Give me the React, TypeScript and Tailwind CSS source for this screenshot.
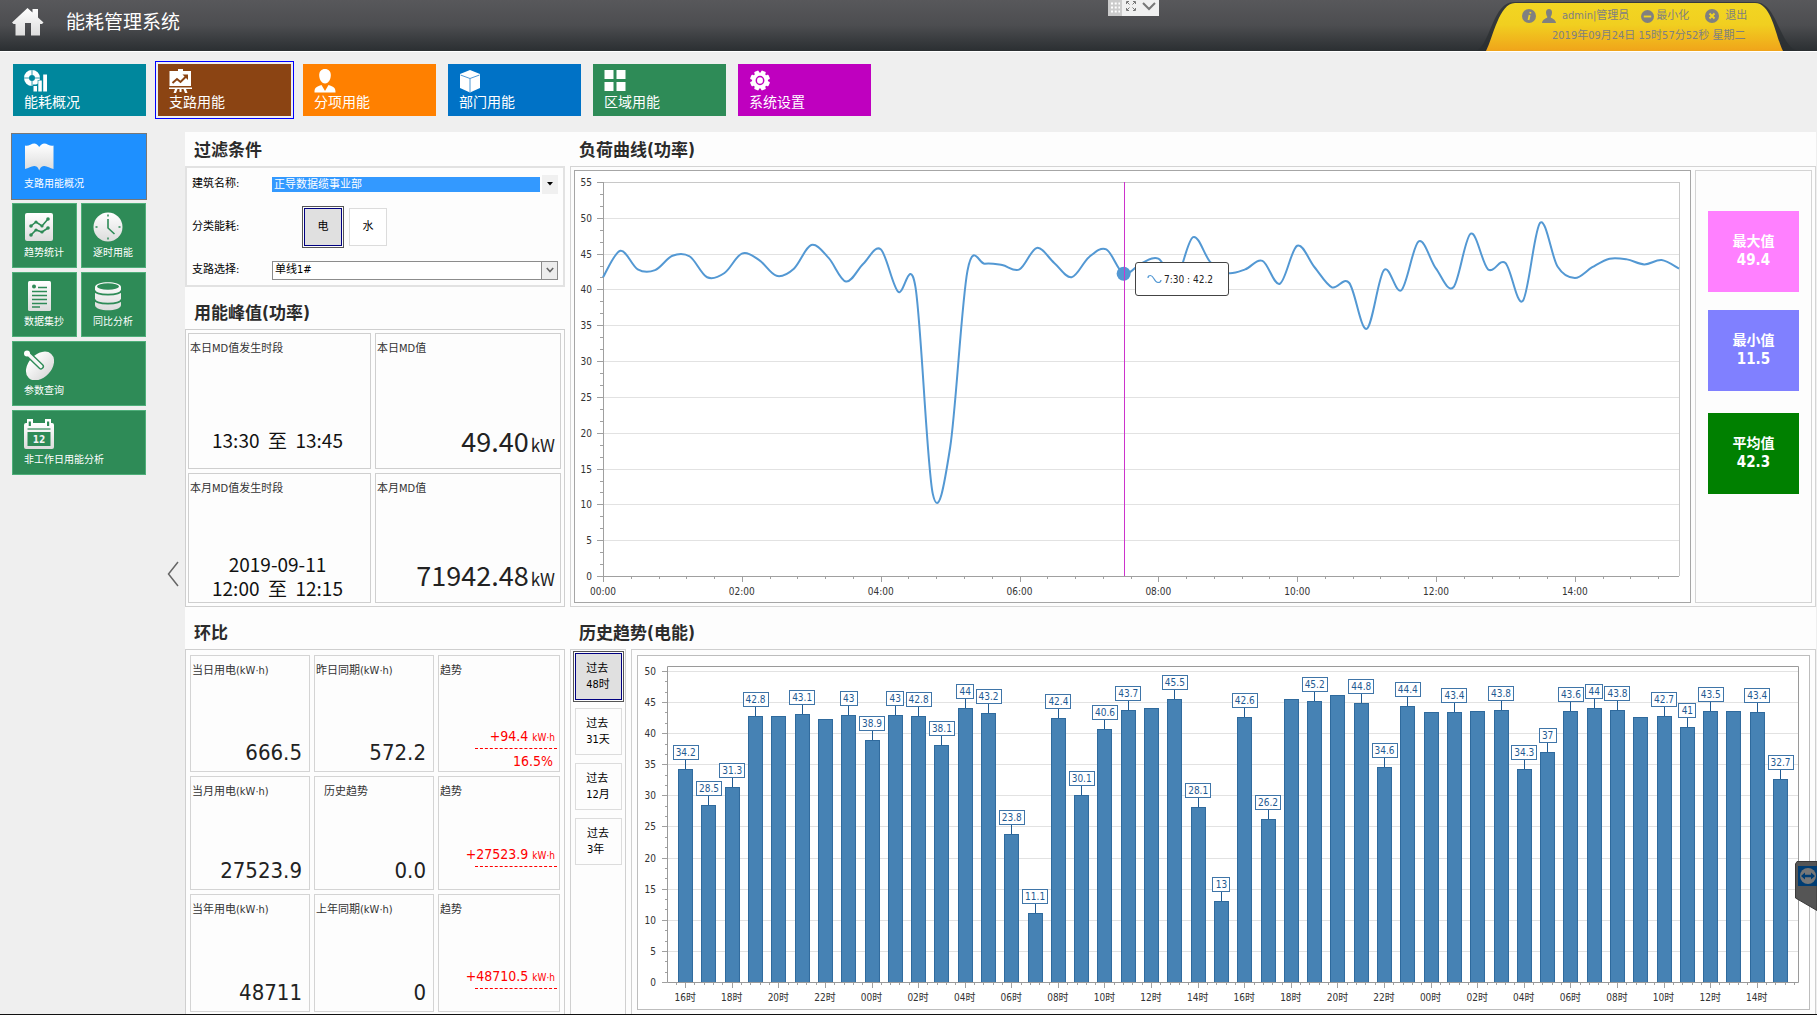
import React, { useLayoutEffect, useRef, useState } from 'react';

type Size = { w: number; h: number };

function useSize() {
  const ref = useRef<HTMLDivElement>(null);
  const [size, setSize] = useState<Size>({ w: 0, h: 0 });
  useLayoutEffect(() => {
    const el = ref.current;
    if (!el) return;
    const measure = () => setSize({ w: el.clientWidth, h: el.clientHeight });
    measure();
    const ro = new ResizeObserver(measure);
    ro.observe(el);
    return () => ro.disconnect();
  }, []);
  return { ref, size };
}

const crisp = (n: number) => Math.round(n) + 0.5;

/* ---------- icons ---------- */

function Shade({ id }: { id: string }) {
  return (
    <linearGradient id={id} x1="0" y1="0" x2="0" y2="1">
      <stop offset="0" stopColor="#ffffff" />
      <stop offset="1" stopColor="#dcdcdc" />
    </linearGradient>
  );
}

const HomeIcon = () => (
  <svg viewBox="0 0 32 28" className="h-7 w-8">
    <defs><Shade id="home" /></defs>
    <path fill="url(#home)" d="M15.500 0 20.500 4.500V1H26V9.500L31.500 14.500 30 16H28V27.500H19V15H13V27.500H3.500V16H1.500L0 14.500Z" />
  </svg>
);

const OverviewIcon = () => (
  <svg viewBox="0 0 24 24" className="h-6 w-6">
    <circle cx="8" cy="9" r="5.500" fill="none" stroke="#fff" strokeWidth="5" />
    <path d="M8 0v6M8 12v6M0 9h5M11 9h5" stroke="#00879d" strokeWidth=".8" />
    <path d="M8.700 15.500h5V11h3V9h7v15H8.700z" fill="#00879d" />
    <path d="M9.500 17h3.500v5.500H9.500zM14.300 11.500h3.500v11h-3.500zM19.200 5.500h3.800v17h-3.800z" fill="#fff" />
  </svg>
);

const BoardIcon = () => (
  <svg viewBox="0 0 24 24" className="h-6 w-6">
    <path d="M9 0h5v2h8v15H0.500V2H9zM0 18.500h23v1.500H0zM6 20h2.500l-1.500 4H4.500zM10.500 20h2v3h-2zM14.500 20H17l1.500 4H16z" fill="#fff" />
    <path d="m3.500 14 4.500-4 3.500 3 5.500-5.500" fill="none" stroke="#8b4413" strokeWidth="2" />
    <path d="M13.500 5.500h5.500V11z" fill="#8b4413" />
  </svg>
);

const PersonIcon = () => (
  <svg viewBox="0 0 24 24" className="h-6 w-6">
    <path d="M11 0c3.600 0 5.800 2.400 5.800 6 0 4-2 8.500-5.800 8.500S5.200 10 5.200 6C5.200 2.400 7.400 0 11 0Z" fill="#fff" />
    <path d="M0.500 23.500c0-4 .5-5.500 7-7.500l3.500 6 3.500-6c6.500 2 7 3.500 7 7.500z" fill="#fff" />
  </svg>
);

const CubeIcon = () => (
  <svg viewBox="0 0 24 24" className="h-6 w-6">
    <path d="M11 1 21 5v14l-10 4.500L1 19V5z" fill="#fff" />
    <path d="m1.500 6 9.500 3.500L20.500 6M11 9.500V23" fill="none" stroke="#4f97d3" strokeWidth="1" />
  </svg>
);

const GridIcon = () => (
  <svg viewBox="0 0 24 24" className="h-6 w-6">
    <path d="M0.500 1h9v9h-9zM12.500 1h9v9h-9zM0.500 13h9v9h-9zM12.500 13h9v9h-9z" fill="#fff" />
  </svg>
);

const GearIcon = () => (
  <svg viewBox="0 0 24 24" className="h-6 w-6">
    <g fill="#fff">
      <circle cx="11" cy="11.500" r="8" />
      {[22.5, 67.5, 112.5, 157.5, 202.5, 247.5, 292.5, 337.5].map((a) => (
        <rect key={a} x="8.600" y="1.500" width="4.800" height="5" rx="1" transform={`rotate(${a} 11 11.500)`} />
      ))}
    </g>
    <ellipse cx="11" cy="11.500" rx="3.700" ry="4" fill="none" stroke="#bf00bf" strokeWidth="1.500" />
  </svg>
);

const BookIcon = () => (
  <svg viewBox="0 0 30 30" className="h-[30px] w-[30px]">
    <defs><Shade id="book" /></defs>
    <path fill="url(#book)" d="M1 2.500C4 4 7 .5 10.500 .5 13 .5 14.500 3 15.200 4 16 3 17.500 .5 20 .5 23.500 .5 26.500 4 29.500 2.500V26C26 25.500 23 22.800 20 23 17 23.200 16 25.500 15.200 27.500 14.500 25.500 13.500 23.200 10.500 23 7.500 22.800 4.500 25.500 1 26Z" />
  </svg>
);

const TrendIcon = () => (
  <svg viewBox="0 0 30 30" className="h-[30px] w-[30px]">
    <defs><Shade id="trend" /></defs>
    <rect x="1" y="1" width="28" height="28" rx="2" fill="url(#trend)" />
    <g fill="none" stroke="#2e8b57" strokeWidth="1.600">
      <path d="m7 14 5-4 6 4 6-7M7 23l5-5 6 2 6-4" />
    </g>
    <g fill="#2e8b57">
      <circle cx="7" cy="14" r="1.800" /><circle cx="12" cy="10" r="1.600" /><circle cx="18" cy="14" r="1.600" /><circle cx="24" cy="7" r="1.800" />
      <circle cx="7" cy="23" r="1.800" /><circle cx="12" cy="18" r="1.600" /><circle cx="18" cy="20" r="1.600" /><circle cx="24" cy="16" r="1.800" />
    </g>
  </svg>
);

const ClockIcon = () => (
  <svg viewBox="0 0 30 30" className="h-[30px] w-[30px]">
    <defs><Shade id="clock" /></defs>
    <circle cx="15" cy="15" r="14.500" fill="url(#clock)" />
    <path d="M15 7v9l6.500 6" fill="none" stroke="#2e8b57" strokeWidth="1.600" />
    <path d="M15 2.500v2M15 25.500v2M2.500 15h2M25.500 15h2" stroke="#2e8b57" strokeWidth="1.500" />
  </svg>
);

const DocIcon = () => (
  <svg viewBox="0 0 30 30" className="h-[30px] w-[30px]">
    <defs><Shade id="doc" /></defs>
    <rect x="4" y="0" width="23" height="30" rx="1.500" fill="url(#doc)" />
    <circle cx="10" cy="5.500" r="2" fill="#2e8b57" />
    <path d="M14 6.500h9M8 10.500h15M8 14.500h15M8 18.500h15M8 22.500h15M8 26h8" stroke="#2e8b57" strokeWidth="1.500" />
  </svg>
);

const DatabaseIcon = () => (
  <svg viewBox="0 0 30 30" className="h-[30px] w-[30px]">
    <defs><Shade id="db" /></defs>
    <path fill="url(#db)" d="M2 6C2 -.5 28 -.5 28 6V24C28 31 2 31 2 24Z" />
    <ellipse cx="15" cy="5.500" rx="11" ry="3.200" fill="#2e8b57" />
    <path d="M1.500 9.500c1.500 5.500 25.500 5.500 27 0M1.500 18.500c1.500 5.500 25.500 5.500 27 0" fill="none" stroke="#2e8b57" strokeWidth="1.800" />
  </svg>
);

const DishIcon = () => (
  <svg viewBox="0 0 30 30" className="h-[30px] w-[30px]">
    <defs><Shade id="dish" /></defs>
    <ellipse cx="16" cy="16" rx="16.500" ry="11.500" transform="rotate(-47 16 16)" fill="url(#dish)" />
    <path d="M5 5 17 16.500" stroke="#2e8b57" strokeWidth="6" strokeLinecap="round" />
    <path d="M3 3 17 16.500" stroke="#f6f6f6" strokeWidth="3.200" strokeLinecap="round" />
    <circle cx="3" cy="3.500" r="3" fill="#fff" />
  </svg>
);

const CalendarIcon = () => (
  <svg viewBox="0 0 30 30" className="h-[30px] w-[30px]">
    <defs><Shade id="cal" /></defs>
    <path fill="url(#cal)" d="M2 4H28Q30 4 30 6V28Q30 30 28 30H2Q0 30 0 28V6Q0 4 2 4Z" />
    <path d="M3 0h6v7H3zM21 0h6v7h-6z" fill="#fff" />
    <path d="M4.700 2.500h2.200v4.500H4.700zM23 2.500h2.200v4.500H23z" fill="#2e8b57" />
    <path d="M3.500 10h23" stroke="#2e8b57" strokeWidth="1.200" />
    <rect x="3.500" y="13" width="23" height="14" fill="#2e8b57" />
    <text x="15" y="24" textAnchor="middle" fontSize="10" fontWeight="bold" fill="#f2f2f2">12</text>
  </svg>
);

/* ---------- navigation ---------- */

const tabs = [
  { label: '能耗概况', icon: OverviewIcon, tone: 'bg-[#00879d]' },
  { label: '支路用能', icon: BoardIcon, tone: 'bg-[#8b4413] outline outline-[#0000ff] outline-offset-2' },
  { label: '分项用能', icon: PersonIcon, tone: 'bg-[#ff8000]' },
  { label: '部门用能', icon: CubeIcon, tone: 'bg-[#0072c6]' },
  { label: '区域用能', icon: GridIcon, tone: 'bg-[#2e8b57]' },
  { label: '系统设置', icon: GearIcon, tone: 'bg-[#bf00bf]' },
];

const sideItems = [
  { label: '支路用能概况', icon: BookIcon, wide: true, active: true },
  { label: '趋势统计', icon: TrendIcon },
  { label: '逐时用能', icon: ClockIcon },
  { label: '数据集抄', icon: DocIcon },
  { label: '同比分析', icon: DatabaseIcon },
  { label: '参数查询', icon: DishIcon, wide: true },
  { label: '非工作日用能分析', icon: CalendarIcon, wide: true },
];

function Header() {
  return (
    <header className="relative flex h-[51px] shrink-0 items-start justify-between bg-gradient-to-b from-[#58585b] via-[#4c4d50] to-[#2b2f32]">
      <div className="flex items-center gap-[22px] pl-3 pt-[6px]">
        <HomeIcon />
        <h1 className="text-[19px] leading-8 text-white">能耗管理系统</h1>
      </div>
      <div className="absolute left-[61%] top-0 flex h-4 w-[51px] bg-[#f0f0f0]">
        <svg viewBox="0 0 51 16" className="h-4 w-[51px]">
          <path d="M0 0h14v16H0z" fill="#cbcbcb" />
          <path d="M3 3.500h9M3 7.500h9M3 11.500h9" stroke="#fff" strokeWidth="2" strokeDasharray="2 1.700" />
          <g fill="none" stroke="#777" strokeWidth="1">
            <path d="M18.500 4V1.500H21M25 1.500h2.500V4M18.500 8v2.500H21M25 10.500h2.500V8M19 2l2.500 2.500M27 2l-2.500 2.500M19 10l2.500-2.500M27 10l-2.500-2.500" />
          </g>
          <path d="m35 3 6 6 6-6" fill="none" stroke="#777" strokeWidth="2" />
        </svg>
      </div>
      <div className="relative mr-[14px] h-[51px] w-[330px]">
        <svg viewBox="0 0 330 51" className="absolute inset-0 h-[51px] w-[330px]">
          <defs>
            <linearGradient id="plate" x1="0" y1="0" x2="0" y2="1">
              <stop offset="0" stopColor="#f2d622" />
              <stop offset=".45" stopColor="#f1cf20" />
              <stop offset="1" stopColor="#f0a41a" />
            </linearGradient>
          </defs>
          <path d="M4 51C18 42 20 2 41 2H282C304 2 306 44 324 51Z" fill="#2a2e30" opacity=".7" />
          <path d="M13 51C20 38 26 3 42 3H282C299 3 303 38 310 51Z" fill="url(#plate)" />
        </svg>
        <div className="relative flex flex-col text-[11px] leading-5 text-[#808080]">
          <div className="flex items-center pl-[49px] pt-[6px]">
            <svg viewBox="0 0 14 14" className="h-[14px] w-[14px]">
              <circle cx="7" cy="7" r="7" fill="#808080" />
              <path d="M8.500 3 8.200 4.500M7.600 6 6.500 11" stroke="#f1d421" strokeWidth="1.800" />
            </svg>
            <svg viewBox="0 0 14 14" className="ml-[6px] h-[14px] w-[14px]">
              <path d="M7 0c2 0 3 1.500 3 3.500C10 6 9 7 8.600 8c0 1.500 5 1.500 5.400 6H0c.4-4.500 5.400-4.500 5.400-6C5 7 4 6 4 3.500 4 1.500 5 0 7 0Z" fill="#808080" />
            </svg>
            <a href="#user" className="ml-[6px]">admin|管理员</a>
            <button className="ml-3 flex items-center gap-[2px]">
              <svg viewBox="0 0 14 14" className="h-[13px] w-[13px]">
                <circle cx="7" cy="7" r="7" fill="#808080" />
                <path d="M3 7h8" stroke="#f1d421" strokeWidth="2" />
              </svg>
              最小化
            </button>
            <button className="ml-4 flex items-center gap-[6px]">
              <svg viewBox="0 0 14 14" className="h-[14px] w-[14px]">
                <circle cx="7" cy="7" r="7" fill="#808080" />
                <path d="m4.500 4.500 5 5m0-5-5 5" stroke="#f1d421" strokeWidth="2" />
              </svg>
              退出
            </button>
          </div>
          <div className="pl-[79px]">2019年09月24日 15时57分52秒 星期二</div>
        </div>
      </div>
    </header>
  );
}

function TabBar() {
  return (
    <nav className="flex shrink-0 gap-3 border-t border-white px-[13px] pb-4 pt-3">
      {tabs.map(({ label, icon: Icon, tone }) => (
        <button key={label} className={`flex h-[52px] w-[133px] flex-col items-start px-[11px] pt-[5px] text-white ${tone}`}>
          <Icon />
          <span className="text-[14px] leading-[18px]">{label}</span>
        </button>
      ))}
    </nav>
  );
}

function Sidebar() {
  return (
    <aside className="flex w-[185px] shrink-0 justify-between pl-3 pt-[2px]">
      <nav className="grid w-[134px] grid-cols-2 content-start gap-1">
        {sideItems.map(({ label, icon: Icon, wide, active }) => (
          <button
            key={label}
            className={`flex h-[65px] flex-col items-start border pl-[11px] pt-2 text-white ${wide ? 'col-span-2' : ''} ${
              active ? 'border-[#1e90ff] bg-[#1e90ff] outline outline-[#777]' : 'border-[#4fae7a] bg-[#2e8b57]'
            }`}
          >
            <Icon />
            <span className="whitespace-nowrap text-[10px] leading-[22px]">{label}</span>
          </button>
        ))}
      </nav>
      <button aria-label="收起侧栏" className="mb-[124px] mr-[6px] self-center pt-[124px]">
        <svg viewBox="0 0 12 26" className="h-[26px] w-3">
          <path d="M11 1 1.500 13 11 25" fill="none" stroke="#666" strokeWidth="1.500" />
        </svg>
      </button>
    </aside>
  );
}

/* ---------- panels ---------- */

function Title({ children, tall }: { children: React.ReactNode; tall?: boolean }) {
  return (
    <h2 className={`flex shrink-0 items-center pl-[9px] text-[17px] font-bold text-[#2b2b2b] ${tall ? 'h-[42px] pt-3' : 'h-[34px] pt-[3px]'}`}>
      {children}
    </h2>
  );
}

function FilterPanel() {
  return (
    <form className="flex flex-col gap-[14px] border-2 border-[#e2e2e2] pb-[5px] pl-[5px] pr-[5px] pt-[6px] text-[11px] text-black">
      <div className="flex h-5 items-center">
        <label htmlFor="building" className="w-20">建筑名称:</label>
        <div className="flex flex-1 items-center gap-[2px]">
          <select id="building" className="h-[15px] flex-1 appearance-none bg-[#3399ff] pl-[2px] text-white">
            <option>正导数据缆事业部</option>
          </select>
          <span className="pointer-events-none flex h-[19px] w-4 items-center justify-center bg-[#f0f0f0]">
            <svg viewBox="0 0 6 4" className="h-1 w-[6px]"><path d="M0 0h6L3 3.500z" fill="#000" /></svg>
          </span>
        </div>
      </div>
      <div className="flex h-[38px] items-center">
        <span className="w-28">分类能耗:</span>
        <div className="flex items-center gap-[7px]">
          <button type="button" className="h-[38px] w-[38px] border border-[#000080] bg-[#e0e0e0] outline outline-offset-1 outline-[#555]">电</button>
          <button type="button" className="h-[38px] w-[38px] border border-[#dcdcdc] bg-white">水</button>
        </div>
      </div>
      <div className="flex h-5 items-center">
        <label htmlFor="branch" className="w-20">支路选择:</label>
        <div className="relative flex-1">
          <select id="branch" className="block h-[19px] w-full appearance-none border border-[#8c8c8c] bg-white pl-[2px]">
            <option>单线1#</option>
          </select>
          <span className="pointer-events-none absolute inset-y-0 right-0 flex w-[17px] items-center justify-center border border-[#8c8c8c] bg-[#ededed]">
            <svg viewBox="0 0 8 6" className="h-[6px] w-2"><path d="m.8 1 3.200 3.500L7.200 1" fill="none" stroke="#666" strokeWidth="1.600" /></svg>
          </span>
        </div>
      </div>
    </form>
  );
}

function PeakCell({ title, children }: { title: string; children: React.ReactNode }) {
  return (
    <div className="flex flex-col justify-between border border-[#cfcfcf] pl-px pr-[5px] pt-[6px]">
      <div className="text-[11px] leading-[18px] text-[#333]">{title}</div>
      <div className="[font-family:'Noto_Sans_CJK_SC',sans-serif]">{children}</div>
    </div>
  );
}

function PowerValue({ value }: { value: string }) {
  return (
    <div className="pb-[7px] text-right text-[27px] leading-8 text-[#222]">
      {value} <span className="-ml-1 text-[17px]">kW</span>
    </div>
  );
}

function PeakPanel() {
  return (
    <div className="grid h-[278px] grid-cols-[183px_minmax(0,1fr)] grid-rows-[137fr_131fr] gap-1 border border-[#cfcfcf] py-[3px] pl-[2px] pr-[3px]">
      <PeakCell title="本日MD值发生时段">
        <div className="whitespace-pre pb-4 text-center text-[19px] leading-6 text-[#111]">13:30  至  13:45</div>
      </PeakCell>
      <PeakCell title="本日MD值"><PowerValue value="49.40" /></PeakCell>
      <PeakCell title="本月MD值发生时段">
        <div className="whitespace-pre pb-[2px] text-center text-[19px] leading-6 text-[#111]">{'2019-09-11\n12:00  至  12:15'}</div>
      </PeakCell>
      <PeakCell title="本月MD值"><PowerValue value="71942.48" /></PeakCell>
    </div>
  );
}

const compareRows = [
  { a: ['当日用电(kW·h)', '666.5'], b: ['昨日同期(kW·h)', '572.2'], diff: '+94.4', pct: '16.5%' },
  { a: ['当月用电(kW·h)', '27523.9'], b: ['历史趋势', '0.0'], diff: '+27523.9', pct: '' },
  { a: ['当年用电(kW·h)', '48711'], b: ['上年同期(kW·h)', '0'], diff: '+48710.5', pct: '' },
];

function CompareCell({ title, value, indent }: { title: string; value: string; indent?: boolean }) {
  return (
    <div className="flex flex-col justify-between border border-[#d4d4d4] pb-[2px] pl-px pr-[7px] pt-[6px]">
      <div className={`whitespace-nowrap text-[11px] leading-[18px] text-[#333] ${indent ? 'pl-2' : ''}`}>{title}</div>
      <div className="text-right text-[22px] leading-8 text-[#222]">{value}</div>
    </div>
  );
}

function ComparePanel() {
  return (
    <div className="grid min-h-0 flex-1 grid-cols-[120fr_120fr_122fr] grid-rows-[117fr_114fr_118fr] gap-1 border border-b-0 border-[#cfcfcf] pb-[2px] pl-[4px] pr-[4px] pt-[5px]">
      {compareRows.map((r) => (
        <React.Fragment key={r.diff}>
          <CompareCell title={r.a[0]} value={r.a[1]} />
          <CompareCell title={r.b[0]} value={r.b[1]} indent={r.b[0] === '历史趋势'} />
          <div className="flex flex-col justify-between border border-[#d4d4d4] pl-px pr-[2px] pt-[6px]">
            <div className="text-[11px] leading-[18px] text-[#333]">趋势</div>
            <div className="flex flex-col items-end text-[14px] text-[#ff0000]">
              <div className="pr-[2px] leading-5">
                {r.diff} <span className="text-[10px]">kW·h</span>
              </div>
              <div className="h-px w-[82px] border-t border-dashed border-[#ff0000]" />
              <div className="h-[22px] pr-1 pt-[2px] leading-5">{r.pct}</div>
            </div>
          </div>
        </React.Fragment>
      ))}
    </div>
  );
}

/* ---------- charts ---------- */

const load = [
  41.7, 45.4, 42.8, 42.7, 44.7, 44.6, 41.7, 42.3, 45.0, 44.1, 41.9, 42.9, 46.2, 44.4, 41.1, 43.6, 45.6, 39.7, 40.4, 11.5,
  17.9, 42.6, 43.6, 43.4, 42.8, 45.8, 43.7, 41.7, 44.5, 45.6, 42.2, 43.6, 44.3, 41.5, 47.3, 43.8, 42.3, 42.8, 44.0, 40.8,
  46.1, 43.1, 40.3, 40.9, 34.5, 42.7, 39.9, 46.7, 42.9, 40.3, 47.8, 42.8, 43.7, 38.4, 49.3, 43.2, 41.6, 43.1, 44.3, 44.2,
  43.5, 44.1, 42.9,
];

function LoadChart() {
  const { ref, size } = useSize();
  const { w, h } = size;
  const L = 28;
  const R = w - 11;
  const T = 11;
  const B = h - 26;
  const x = (hour: number) => L + ((R - L) * hour) / 15.5;
  const y = (v: number) => B - ((B - T) * v) / 55;
  const pts = load.map((v, i) => [x(i / 4), y(v)]);
  let d = '';
  pts.forEach((p, i) => {
    if (i === 0) {
      d = `M${p[0]} ${p[1]}`;
      return;
    }
    const p0 = pts[Math.max(0, i - 2)];
    const p1 = pts[i - 1];
    const p3 = pts[Math.min(pts.length - 1, i + 1)];
    d += `C${p1[0] + (p[0] - p0[0]) / 6} ${p1[1] + (p[1] - p0[1]) / 6} ${p[0] - (p3[0] - p1[0]) / 6} ${p[1] - (p3[1] - p1[1]) / 6} ${p[0]} ${p[1]}`;
  });
  const cx = x(7.5);
  const cy = y(42.2);
  return (
    <div ref={ref} className="relative min-h-0 min-w-0 flex-1 overflow-hidden border border-[#a6a6a6] bg-white">
      {w > 0 && (
        <>
          <svg width={w} height={h} className="block" fontSize="10" fill="#333">
            {Array.from({ length: 12 }, (_, i) => i * 5).map((v) => (
              <g key={v}>
                <path d={`M${L} ${crisp(y(v))}H${R}`} stroke={v === 55 ? '#c8c8c8' : '#e2e2e2'} />
                <path d={`M${L - 6} ${crisp(y(v))}H${L}`} stroke="#a0a0a0" />
                {v < 55 && <path d={`M${L - 3} ${crisp(y(v + 1.67))}H${L}M${L - 3} ${crisp(y(v + 3.33))}H${L}`} stroke="#a0a0a0" />}
                <text x={L - 11} y={y(v) + 4} textAnchor="end">{v}</text>
              </g>
            ))}
            {[0, 2, 4, 6, 8, 10, 12, 14].map((t) => (
              <g key={t}>
                <path d={`M${crisp(x(t))} ${B}v6`} stroke="#a0a0a0" />
                {[0.4, 0.8, 1.2, 1.6].filter((m) => t + m <= 15.5).map((m) => (
                  <path key={m} d={`M${crisp(x(t + m))} ${B}v3`} stroke="#a0a0a0" />
                ))}
                <text x={x(t)} y={B + 19} textAnchor="middle">{`${String(t).padStart(2, '0')}:00`}</text>
              </g>
            ))}
            <path d={`M${crisp(R)} ${T}V${B}`} stroke="#c8c8c8" />
            <path d={`M${crisp(L)} ${T}V${B}`} stroke="#a0a0a0" />
            <path d={`M${L} ${crisp(B)}H${R}`} stroke="#a0a0a0" />
            <path d={d} fill="none" stroke="#5398d3" strokeWidth="2" />
            <circle cx={cx} cy={cy} r="7" fill="#5398d3" />
            <path d={`M${crisp(cx)} ${T}V${B}`} stroke="#cc33cc" />
          </svg>
          <div
            className="absolute flex h-[34px] w-[94px] items-center gap-[2px] rounded-[3px] border border-[#444] bg-white pl-[11px] text-[10px] text-[#222]"
            style={{ left: Math.round(cx + 11), top: Math.round(cy - 12) }}
          >
            <svg viewBox="0 0 15 10" className="h-[10px] w-[15px] shrink-0">
              <path d="M1 4C1 2 2 1.500 3.500 1.500 7 1.500 7 8.500 11 8.500 13 8.500 14 7.500 14 6" fill="none" stroke="#5398d3" strokeWidth="1.200" />
            </svg>
            <span className="whitespace-nowrap">7:30 : 42.2</span>
          </div>
        </>
      )}
    </div>
  );
}

const bars: [number, boolean][] = [
  [34.2, true], [28.5, true], [31.3, true], [42.8, true], [42.8, false], [43.1, true], [42.3, false], [43, true],
  [38.9, true], [43, true], [42.8, true], [38.1, true], [44, true], [43.2, true], [23.8, true], [11.1, true],
  [42.4, true], [30.1, true], [40.6, true], [43.7, true], [44.1, false], [45.5, true], [28.1, true], [13, true],
  [42.6, true], [26.2, true], [45.5, false], [45.2, true], [46.2, false], [44.8, true], [34.6, true], [44.4, true],
  [43.4, false], [43.4, true], [43.5, false], [43.8, true], [34.3, true], [37, true], [43.6, true], [44, true],
  [43.8, true], [42.6, false], [42.7, true], [41, true], [43.5, true], [43.6, false], [43.4, true], [32.7, true],
];

function HistoryChart() {
  const { ref, size } = useSize();
  const { w, h } = size;
  const L = 29;
  const R = w - 11;
  const T = 10;
  const B = h - 27;
  const step = (R - L) / 48.55;
  const x = (i: number) => L + step * (0.78 + i);
  const y = (v: number) => B - ((B - T) * v) / 50.8;
  return (
    <div ref={ref} className="min-h-0 min-w-0 flex-1 overflow-hidden border border-[#bdbdbd] bg-white">
      {w > 0 && (
        <svg width={w} height={h} className="block" fontSize="10" fill="#333">
          {Array.from({ length: 11 }, (_, i) => i * 5).map((v) => (
            <g key={v}>
              <path d={`M${L} ${crisp(y(v))}H${R}`} stroke="#e2e2e2" />
              <path d={`M${L - 5} ${crisp(y(v))}H${L}`} stroke="#a0a0a0" />
              {v < 50 && <path d={`M${L - 2} ${crisp(y(v + 1.67))}H${L}M${L - 2} ${crisp(y(v + 3.33))}H${L}`} stroke="#a0a0a0" />}
              <text x={L - 11} y={y(v) + 4} textAnchor="end">{v}</text>
            </g>
          ))}
          {bars.map(([v, tagged], i) => {
            const cx = x(i);
            const top = Math.round(y(v));
            const left = Math.round(cx - 7);
            const tw = Number.isInteger(v) ? 17 : 25;
            return (
              <g key={i}>
                <rect x={left + 0.5} y={top + 0.5} width={step * 0.6} height={B - top} fill="#4682b4" stroke="#2f6a9d" />
                {tagged && (
                  <>
                    <path d={`M${crisp(cx)} ${top - 9}V${top}`} stroke="#1f5a92" />
                    <rect x={Math.round(cx - tw / 2) + 0.5} y={top - 23.5} width={tw} height="14" fill="#fff" stroke="#3f75a8" />
                    <text x={cx + 0.5} y={top - 13} textAnchor="middle" fill="#1f5a92">{v}</text>
                  </>
                )}
                {i % 2 === 0 && (
                  <text x={cx} y={B + 19} textAnchor="middle">{`${String((16 + i) % 24).padStart(2, '0')}时`}</text>
                )}
              </g>
            );
          })}
          {Array.from({ length: 121 }, (_, k) => k - 1).filter((k) => x(k * 0.4) < R).map((k) => (
            <path key={k} d={`M${crisp(x(k * 0.4))} ${B}v${k % 5 === 0 ? 6 : 3}`} stroke="#a0a0a0" />
          ))}
          <path d={`M${crisp(L)} ${B + 0.5}V${T + 0.5}H${R + 0.5}V${B + 0.5}Z`} fill="none" stroke="#9a9a9a" />
        </svg>
      )}
    </div>
  );
}

const stats = [
  { label: '最大值', value: '49.4', tone: 'bg-[#ff80ff]' },
  { label: '最小值', value: '11.5', tone: 'mt-[18px] bg-[#8080ff]' },
  { label: '平均值', value: '42.3', tone: 'mt-[22px] bg-[#008000]' },
];

function StatPanel() {
  return (
    <div className="flex w-[117px] shrink-0 flex-col items-center border border-[#d4d4d4] pt-10">
      {stats.map((s) => (
        <div key={s.label} className={`flex h-[81px] w-[91px] flex-col items-center justify-center pb-px font-bold text-white ${s.tone}`}>
          <span className="text-[14px] leading-[19px]">{s.label}</span>
          <span className="text-[15px] leading-[19px]">{s.value}</span>
        </div>
      ))}
    </div>
  );
}

const ranges = ['48时', '31天', '12月', '3年'];

function RangePanel() {
  return (
    <div className="flex w-14 shrink-0 flex-col items-center gap-2 border border-b-0 border-[#d0d0d0] pt-[3px] text-[11px] leading-4 text-black">
      {ranges.map((r, i) => (
        <button
          key={r}
          className={`flex h-[47px] w-[47px] items-center justify-center border text-left ${
            i === 0 ? 'border-[#000080] bg-[#e0e0e0] outline outline-offset-1 outline-[#555]' : 'border-[#dcdcdc]'
          }`}
        >
          <span>过去<br />{r}</span>
        </button>
      ))}
    </div>
  );
}

export default function App() {
  return (
    <div className="relative flex h-screen min-h-[900px] min-w-[1200px] flex-col overflow-hidden border-b border-[#111] bg-[#efefef] [font-family:'DejaVu_Sans_Condensed','Noto_Sans_CJK_SC',sans-serif]">
      <Header />
      <TabBar />
      <div className="flex min-h-0 flex-1">
        <Sidebar />
        <main className="mr-px grid min-w-0 flex-1 grid-cols-[380px_minmax(0,1fr)] grid-rows-[auto_minmax(0,1fr)] gap-x-[5px] bg-[#fdfdfd]">
          <section className="flex flex-col">
            <Title>过滤条件</Title>
            <FilterPanel />
            <Title tall>用能峰值(功率)</Title>
            <PeakPanel />
          </section>
          <section className="flex min-w-0 flex-col">
            <Title>负荷曲线(功率)</Title>
            <div className="flex min-h-0 flex-1 gap-1 border border-[#d4d4d4] p-[3px]">
              <LoadChart />
              <StatPanel />
            </div>
          </section>
          <section className="flex min-h-0 flex-col">
            <Title tall>环比</Title>
            <ComparePanel />
          </section>
          <section className="flex min-h-0 min-w-0 flex-col">
            <Title tall>历史趋势(电能)</Title>
            <div className="flex min-h-0 flex-1 gap-[5px]">
              <RangePanel />
              <div className="flex min-w-0 flex-1 border border-b-0 border-[#cfcfcf] p-[5px] pb-1">
                <HistoryChart />
              </div>
            </div>
          </section>
        </main>
      </div>
      <button aria-label="远程控制" className="absolute bottom-[103px] right-0">
        <svg viewBox="0 0 23 50" className="h-[50px] w-[23px]">
          <path d="M3 0.500H23V49.500L1.500 37V3Z" fill="#555" stroke="#3a3a3a" />
          <rect x="4" y="5" width="19" height="20" fill="#003d73" />
          <circle cx="14" cy="15" r="8" fill="#777" />
          <path d="M7 15l4-3.500v2.300h6v-2.300l4 3.500-4 3.500v-2.300h-6v2.300z" fill="#003d73" />
        </svg>
      </button>
    </div>
  );
}
